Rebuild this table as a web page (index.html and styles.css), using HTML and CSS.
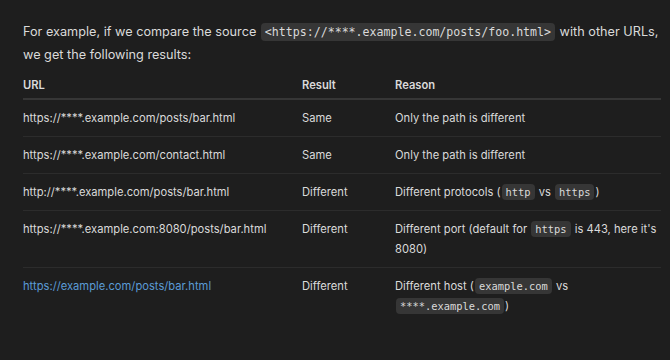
FILE: index.html
```html
<!DOCTYPE html>
<html>
<head>
<meta charset="utf-8">
<link rel="stylesheet" href="styles.css">
</head>
<body>
<div class="page">
  <p class="intro">For example, if we compare the source <code>&lt;https://****.example.com/posts/foo.html&gt;</code> with other URLs, we get the following results:</p>
  <table class="results">
    <thead>
      <tr><th class="c-url">URL</th><th class="c-res">Result</th><th class="c-why">Reason</th></tr>
    </thead>
    <tbody>
      <tr><td>https://****.example.com/posts/bar.html</td><td>Same</td><td>Only the path is different</td></tr>
      <tr><td>https://****.example.com/contact.html</td><td>Same</td><td>Only the path is different</td></tr>
      <tr><td>http://****.example.com/posts/bar.html</td><td>Different</td><td>Different protocols (<code>http</code> vs <code>https</code>)</td></tr>
      <tr><td>https://****.example.com:8080/posts/bar.html</td><td>Different</td><td>Different port (default for <code>https</code> is 443, here it's 8080)</td></tr>
      <tr><td><a class="link" href="#">https://example.com/posts/bar.html</a></td><td>Different</td><td>Different host (<code>example.com</code> vs <code>****.example.com</code>)</td></tr>
    </tbody>
  </table>
</div>
</body>
</html>
```
FILE: styles.css
```css
html, body {
  margin: 0;
  padding: 0;
  background: #1e1e1e;
}
body {
  font-family: Inter, "Noto Sans", sans-serif;
  color: #dadada;
  font-size: 11.2px;
}
.page {
  padding: 21px 9px 0 23px;
}
.intro {
  margin: 0 0 3px 0;
  font-size: 12.7px;
  line-height: 22.5px;
}
code {
  font-family: "DejaVu Sans Mono", monospace;
  font-size: 10.4px;
  background: #363636;
  color: #dadada;
  border-radius: 4px;
  padding: 2px 4px;
  margin: 0 1px;
}
.intro code {
  font-size: 11.6px;
}
.results {
  width: 638px;
  border-collapse: collapse;
  table-layout: fixed;
}
.results th {
  text-align: left;
  font-weight: 600;
  font-size: 11.2px;
  line-height: 20px;
  padding: 6px 0 3px 0;
  border-bottom: 2px solid #363636;
}
.c-url { width: 279px; }
.c-res { width: 93px; }
.c-why { width: 266px; }
.results td {
  line-height: 20px;
  padding: 8px 0;
  vertical-align: top;
  border-bottom: 1px solid #2c2c2c;
}
.results td:nth-child(3) { padding-right: 4px; }
.results tbody tr:last-child td { border-bottom: none; }
.link {
  color: #5b9bd5;
  text-decoration: none;
}
```
